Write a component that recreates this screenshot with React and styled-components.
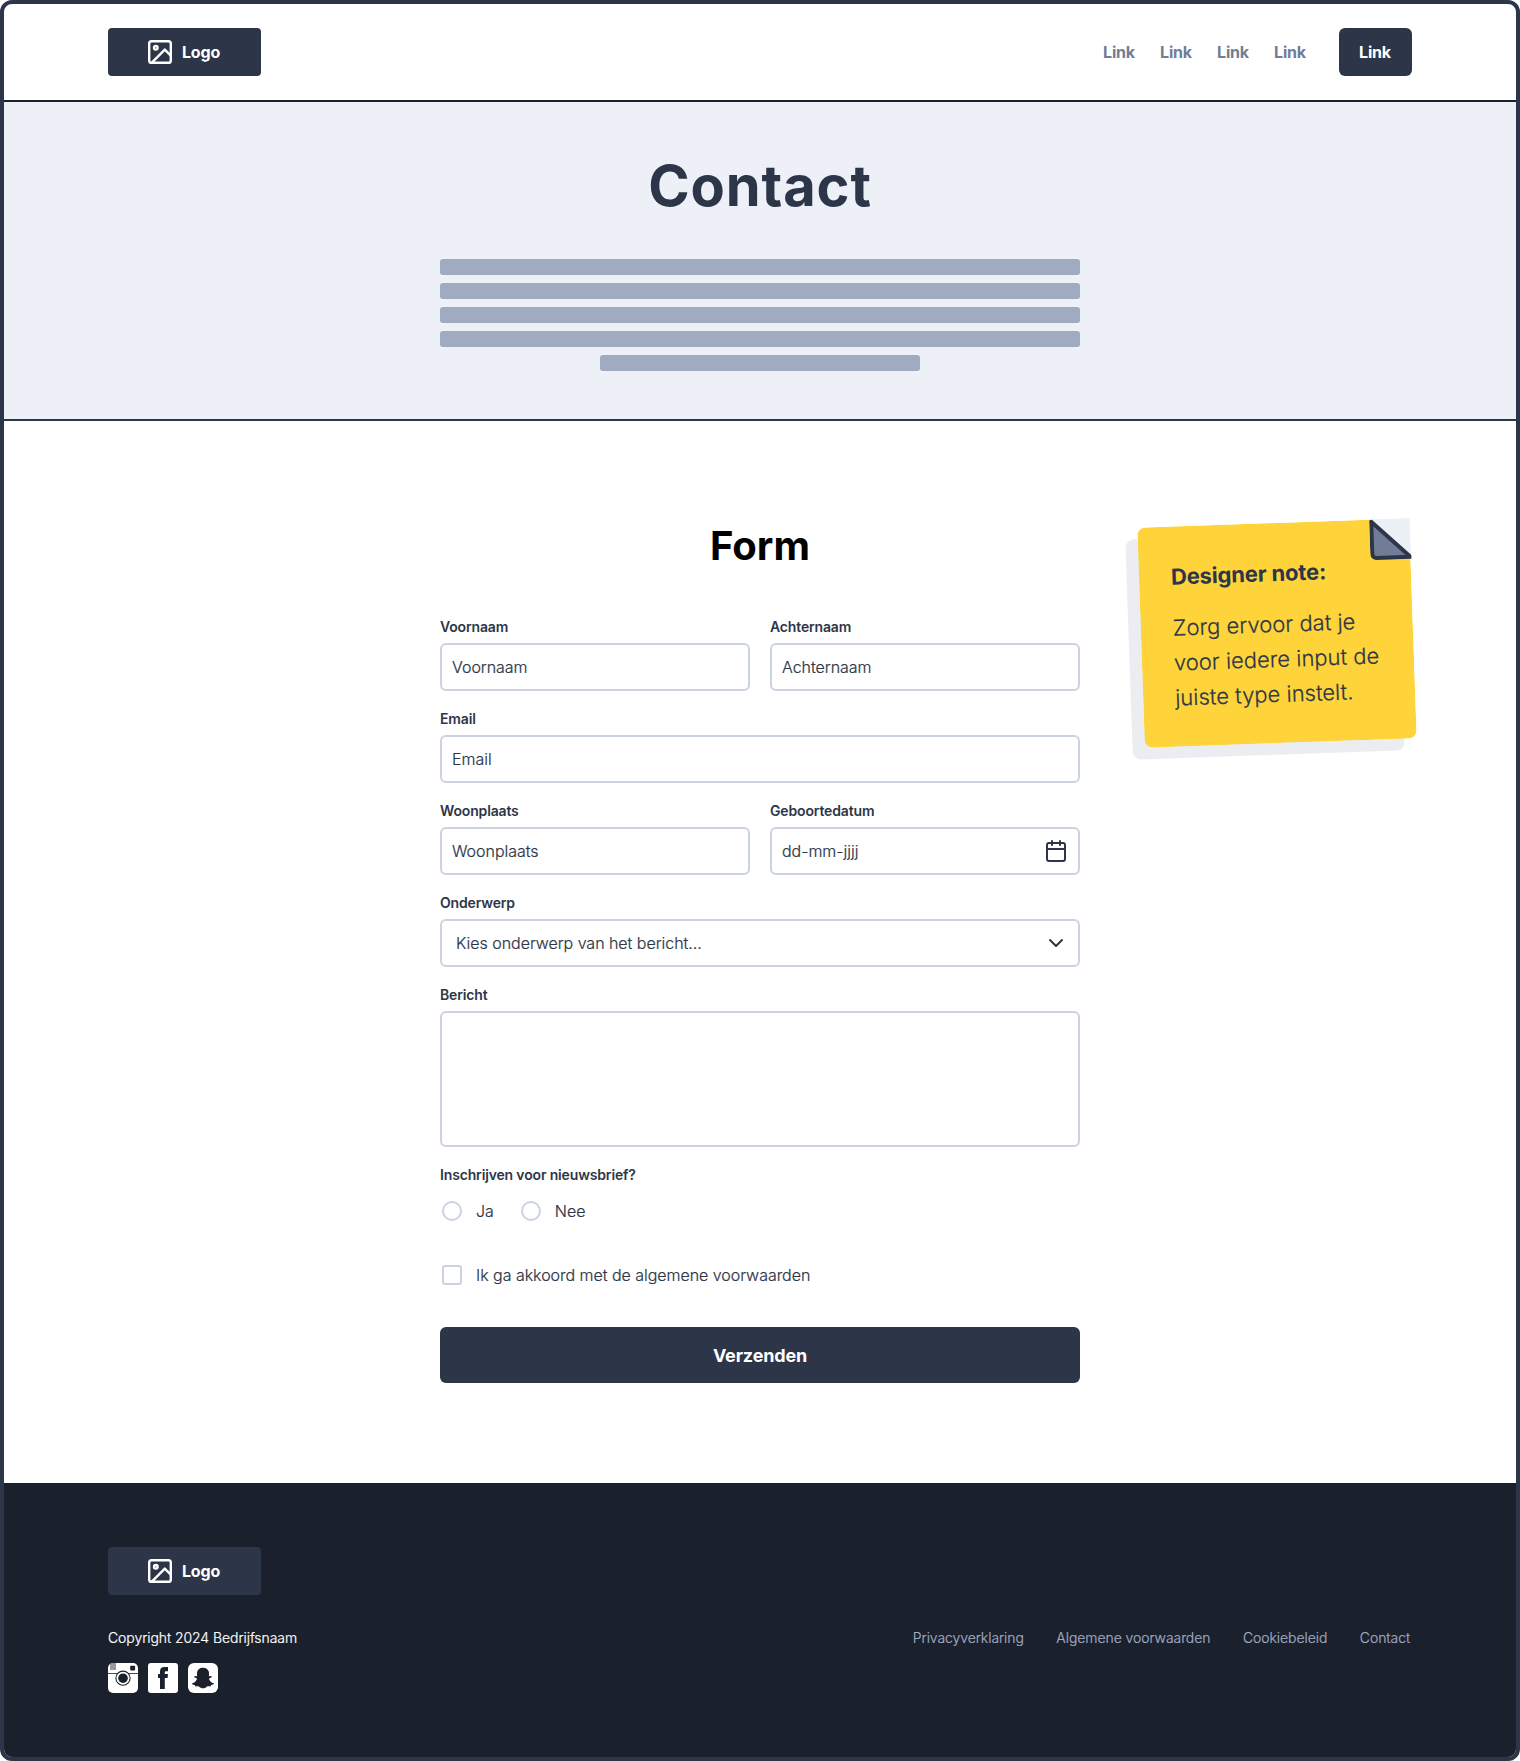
import React from "react";
import styled, { createGlobalStyle, css } from "styled-components";
import { FaSnapchatGhost } from "react-icons/fa";

const GlobalStyle = createGlobalStyle`
  *, *::before, *::after { box-sizing: border-box; }
  body { margin: 0; background: #fff; color: #2d3648; font-family: Inter, "Liberation Sans", sans-serif; }
  h1, h2, h3, p, ul { margin: 0; padding: 0; }
  input, select, textarea, button { font: inherit; color: inherit; }
`;

const bodyText = css`
  font-weight: 300;
  letter-spacing: -0.002em;
  -webkit-text-stroke: 0.2px currentColor;
`;

const Page = styled.div`
  display: flex;
  flex-direction: column;
  height: 1761px;
  border: 4px solid #2d3648;
  border-radius: 12px;
  overflow: hidden;
`;

const Header = styled.header`
  display: flex;
  align-items: center;
  justify-content: space-between;
  height: 98px;
  padding: 0 104px;
  border-bottom: 2px solid #1a202c;
`;

const LogoBox = styled.a`
  display: flex;
  align-items: center;
  justify-content: center;
  gap: 10px;
  width: 153px;
  height: 48px;
  padding-right: 1px;
  border-radius: 4px;
  background: #2d3648;
  color: #fff;
  font-size: 16px;
  font-weight: 700;
  line-height: 24px;
  letter-spacing: -0.009em;
`;

const Nav = styled.nav`
  display: flex;
  align-items: center;
  gap: 25px;
`;

const NavLink = styled.a`
  width: 32px;
  color: #717d96;
  font-size: 16px;
  font-weight: 700;
  line-height: 24px;
  letter-spacing: -0.011em;
  text-align: center;
`;

const NavButton = styled(NavLink)`
  width: 73px;
  margin-left: 8px;
  padding: 12px 1px 12px 0;
  border-radius: 6px;
  background: #2d3648;
  color: #fff;
`;

const Hero = styled.section`
  display: flex;
  flex-direction: column;
  align-items: center;
  gap: 33px;
  height: 319px;
  padding-top: 44px;
  border-bottom: 2px solid #2d3648;
  background: #edf0f7;
`;

const HeroTitle = styled.h1`
  font-size: 56px;
  font-weight: 700;
  line-height: 80px;
  letter-spacing: 0.9px;
`;

const Lines = styled.div`
  display: flex;
  flex-direction: column;
  align-items: center;
  gap: 8px;
  width: 640px;
`;

const Line = styled.span`
  width: ${(p) => (p.$short ? "50%" : "100%")};
  height: 16px;
  border-radius: 3px;
  background: #a0abc0;
`;

const Main = styled.main`
  display: grid;
  grid-template-columns: 1fr 640px 1fr;
  height: 1062px;
  padding-top: 101px;
`;

const Form = styled.form`
  grid-column: 2;
  display: flex;
  flex-direction: column;
  gap: 16px;
`;

const FormTitle = styled.h2`
  margin-bottom: 29px;
  color: #000;
  font-size: 40px;
  font-weight: 700;
  line-height: 48px;
  text-align: center;
`;

const Row = styled.div`
  display: grid;
  grid-template-columns: 1fr 1fr;
  gap: 20px;
`;

const FieldBox = styled.div`
  display: flex;
  flex-direction: column;
  gap: 4px;
  min-width: 0;
`;

const Label = styled.label`
  font-size: 14px;
  font-weight: 600;
  line-height: 24px;
  letter-spacing: -0.011em;
`;

const Control = styled.div`
  display: flex;
  align-items: center;
  height: ${(p) => p.$height || 48}px;
  padding: 0 10px;
  border: 2px solid #cbd2e0;
  border-radius: 6px;
  background: #fff;
  svg { flex: none; }
`;

const Input = styled.input`
  ${bodyText}
  flex: 1;
  min-width: 0;
  padding: 0;
  border: 0;
  outline: 0;
  background: none;
  font-size: 16px;
  line-height: 24px;
  &::placeholder { color: #2d3648; opacity: 1; }
`;

const Select = styled.select`
  ${bodyText}
  flex: 1;
  height: 24px;
  padding: 0 0 0 4px;
  border: 0;
  outline: 0;
  appearance: none;
  background: none;
  font-size: 16px;
  line-height: 24px;
`;

const TextArea = styled.textarea`
  ${bodyText}
  flex: 1;
  height: 100%;
  padding: 10px 0;
  border: 0;
  outline: 0;
  resize: none;
  background: none;
  font-size: 16px;
`;

const Options = styled.div`
  display: flex;
  gap: 25px;
  margin-top: 8px;
`;

const Option = styled.label`
  ${bodyText}
  display: flex;
  align-items: center;
  gap: 14px;
  padding-left: 2px;
  font-size: 16px;
  line-height: 24px;
`;

const Tick = styled.input`
  width: 20px;
  height: 20px;
  margin: 0;
  appearance: none;
  border: 2px solid #cbd2e0;
  border-radius: ${(p) => (p.type === "radio" ? "50%" : "3px")};
  background: #fff;
`;

const Terms = styled.div`
  margin: 24px 0;
`;

const Submit = styled.button`
  height: 56px;
  border: 0;
  border-radius: 6px;
  background: #2d3648;
  color: #fff;
  font-size: 18px;
  font-weight: 700;
  letter-spacing: -0.008em;
`;

const Aside = styled.aside`
  grid-column: 3;
  padding: 1px 0 0 60.5px;
`;

const Note = styled.div`
  position: relative;
  width: 272px;
  height: 220px;
  padding: 33px 32px;
  border-radius: 8px 0 8px 8px;
  background: linear-gradient(#edf0f7, #edf0f7) top right / 36px 34px no-repeat, #ffd43a;
  box-shadow: -12.4px 11.6px 0 #ebedf1;
  transform: rotate(-2deg);
`;

const Fold = styled.svg`
  position: absolute;
  top: 0;
  right: -0.5px;
`;

const NoteTitle = styled.h3`
  margin-bottom: 16px;
  font-size: 22px;
  font-weight: 700;
  line-height: 35px;
  letter-spacing: -0.008em;
`;

const NoteText = styled.p`
  ${bodyText}
  font-size: 22px;
  line-height: 35px;
  letter-spacing: 0;
  white-space: nowrap;
`;

const Footer = styled.footer`
  flex: 1;
  padding: 64px 104px 0;
  background: #1a202c;
`;

const FooterRow = styled.div`
  ${bodyText}
  display: flex;
  justify-content: space-between;
  margin-top: 31px;
  font-size: 14px;
  line-height: 24px;
  letter-spacing: -0.005em;
`;

const Copyright = styled.p`
  color: #fff;
`;

const FooterLinks = styled.nav`
  display: flex;
  gap: 32.5px;
  margin-right: 2px;
  color: #a0abc0;
`;

const Social = styled.div`
  display: flex;
  gap: 10px;
  margin-top: 13px;
`;

const SocialLink = styled.a`
  display: flex;
  align-items: center;
  justify-content: center;
  width: 30px;
  height: 30px;
  overflow: hidden;
  border-radius: ${(p) => p.$radius}px;
  background: #fff;
  color: #1a202c;
`;

const Stroke = ({ width = 2, children }) => (
  <svg width="24" height="24" viewBox="0 0 24 24" fill="none" stroke="currentColor" strokeWidth={width} strokeLinecap="round" strokeLinejoin="round">
    {children}
  </svg>
);

const Logo = () => (
  <LogoBox>
    <Stroke width={2.4}>
      <rect x="1.2" y="1.2" width="21.6" height="21.6" rx="2.4" />
      <circle cx="7.8" cy="7.8" r="1.8" />
      <path d="M22.8 15.6 16.8 9.6 3.6 22.8" />
    </Stroke>
    Logo
  </LogoBox>
);

const Field = ({ label, placeholder = label, icon }) => (
  <FieldBox>
    <Label>{label}</Label>
    <Control>
      <Input type="text" placeholder={placeholder} />
      {icon}
    </Control>
  </FieldBox>
);

const CalendarIcon = () => (
  <Stroke>
    <rect x="3" y="4" width="18" height="18" rx="2" />
    <path d="M16 2v4M8 2v4M3 10h18" />
  </Stroke>
);

const InstagramIcon = () => (
  <svg width="30" height="30" viewBox="0 0 30 30">
    <path d="M3 0v7M5 0v7M7 0v7" stroke="currentColor" strokeWidth="0.9" />
    <rect x="22.2" y="2.8" width="4.9" height="4.7" rx="0.8" fill="currentColor" />
    <path d="M0 10.5h30" stroke="currentColor" strokeWidth="0.8" />
    <circle cx="15" cy="15.2" r="7.1" fill="#fff" stroke="currentColor" strokeWidth="1.1" />
    <circle cx="15" cy="15.2" r="4.8" fill="currentColor" />
  </svg>
);

const FacebookIcon = () => (
  <svg width="30" height="30" viewBox="0 0 30 30">
    <path fill="currentColor" d="M12 26V15.1h-2v-4.2h2V8.4C12 5.4 13.6 4 16.5 4H20v4.3h-1.9c-1 0-1.3.4-1.3 1.3v1.3H20l-.4 4.2h-2.8V26Z" />
  </svg>
);

export default function App() {
  return (
    <>
      <GlobalStyle />
      <Page>
        <Header>
          <Logo />
          <Nav>
            {[1, 2, 3, 4].map((n) => (
              <NavLink key={n}>Link</NavLink>
            ))}
            <NavButton>Link</NavButton>
          </Nav>
        </Header>
        <Hero>
          <HeroTitle>Contact</HeroTitle>
          <Lines>
            <Line />
            <Line />
            <Line />
            <Line />
            <Line $short />
          </Lines>
        </Hero>
        <Main>
          <Form>
            <FormTitle>Form</FormTitle>
            <Row>
              <Field label="Voornaam" />
              <Field label="Achternaam" />
            </Row>
            <Field label="Email" />
            <Row>
              <Field label="Woonplaats" />
              <Field label="Geboortedatum" placeholder="dd-mm-jjjj" icon={<CalendarIcon />} />
            </Row>
            <FieldBox>
              <Label>Onderwerp</Label>
              <Control>
                <Select>
                  <option>Kies onderwerp van het bericht...</option>
                </Select>
                <Stroke>
                  <path d="m6 9 6 6 6-6" />
                </Stroke>
              </Control>
            </FieldBox>
            <FieldBox>
              <Label>Bericht</Label>
              <Control $height={136}>
                <TextArea />
              </Control>
            </FieldBox>
            <FieldBox>
              <Label as="span">Inschrijven voor nieuwsbrief?</Label>
              <Options>
                <Option>
                  <Tick type="radio" name="news" />
                  Ja
                </Option>
                <Option>
                  <Tick type="radio" name="news" />
                  Nee
                </Option>
              </Options>
            </FieldBox>
            <Terms>
              <Option>
                <Tick type="checkbox" />
                Ik ga akkoord met de algemene voorwaarden
              </Option>
            </Terms>
            <Submit type="button">Verzenden</Submit>
          </Form>
          <Aside>
            <Note>
              <Fold width="41" height="41" viewBox="0 0 41 41">
                <path d="M0 0H40.5V40Z" fill="#edf0f7" />
                <path d="M2 2V34.5a4 4 0 0 0 4 4H40Z" fill="#717d96" stroke="#2d3648" strokeWidth="4" strokeLinejoin="round" />
              </Fold>
              <NoteTitle>Designer note:</NoteTitle>
              <NoteText>
                Zorg ervoor dat je
                <br />
                voor iedere input de
                <br />
                juiste type instelt.
              </NoteText>
            </Note>
          </Aside>
        </Main>
        <Footer>
          <Logo />
          <FooterRow>
            <Copyright>Copyright 2024 Bedrijfsnaam</Copyright>
            <FooterLinks>
              <a>Privacyverklaring</a>
              <a>Algemene voorwaarden</a>
              <a>Cookiebeleid</a>
              <a>Contact</a>
            </FooterLinks>
          </FooterRow>
          <Social>
            <SocialLink $radius={5}>
              <InstagramIcon />
            </SocialLink>
            <SocialLink $radius={3}>
              <FacebookIcon />
            </SocialLink>
            <SocialLink $radius={6}>
              <FaSnapchatGhost size={22} />
            </SocialLink>
          </Social>
        </Footer>
      </Page>
    </>
  );
}
